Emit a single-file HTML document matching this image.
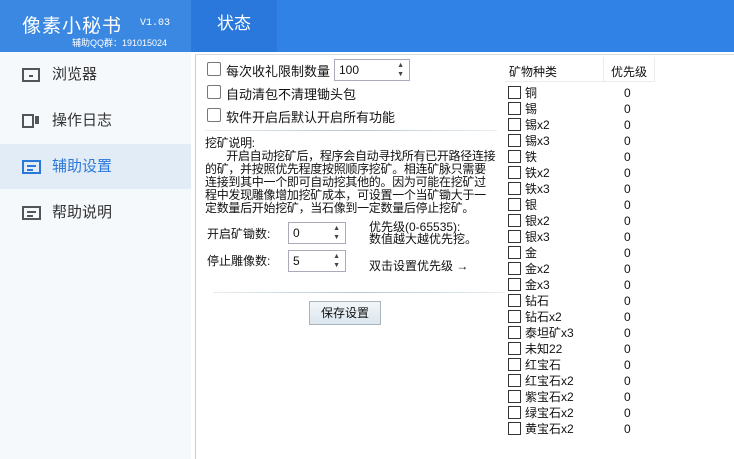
<!DOCTYPE html>
<html><head><meta charset="utf-8"><style>
*{margin:0;padding:0;box-sizing:border-box}
body{width:734px;height:459px;overflow:hidden;background:#fff;font-family:"Liberation Sans","Noto Sans CJK SC",sans-serif;font-size:12px;color:#111;position:relative}
.abs{position:absolute}
.hdr{left:0;top:0;width:734px;height:52px;background:#3082e6}
.logo{left:0;top:0;width:191px;height:52px;background:#3a88e2}
.tab{left:191px;top:0;width:86px;height:52px;background:#2a78dc;color:#fff;font-size:17px;text-align:center;line-height:48px}
.side{left:0;top:52px;width:191px;height:407px;background:#f5f9fc}
.item{position:absolute;left:0;width:191px;height:45px;font-size:15px;color:#333;line-height:45px;padding-left:52px}
.item.sel{background:#e2ecf6;color:#2b78d8}
.ico{position:absolute;left:22px;top:16px;width:19px;height:14px;border:2px solid #555}
.ico i{position:absolute;left:3px;right:3px;height:2px;background:#555}
.sel .ico{border-color:#2b78d8}.sel .ico i{background:#2b78d8}
.panel{left:195px;top:54px;width:539px;height:405px;border-left:1px solid #c8ccd0;border-top:1px solid #d8dce0}
.cb{position:absolute;width:14px;height:14px;border:1px solid #777;background:#fff;border-radius:2px}
.t{position:absolute;white-space:nowrap}
.spin{position:absolute;height:22px;border:1px solid #aab;background:#fff;padding-left:4px;line-height:20px}
.spin:after{content:"▲\A▼";white-space:pre;position:absolute;right:5px;top:1px;font-size:7px;line-height:9px;color:#444}
.hr{position:absolute;height:1px;background:linear-gradient(90deg,#e8eef2,#b8c6cf,#e8eef2)}
.m{position:absolute;left:508px;width:120px;height:16px;line-height:16px}
.m .b{position:absolute;left:0;top:1px;width:13px;height:13px;border:1px solid #333}
.m .n{position:absolute;left:17px;top:0;font-size:12px;line-height:16px}
.m .v{position:absolute;left:116px;top:0;line-height:16px}
</style></head><body>
<div class="abs hdr"></div>
<div class="abs logo"></div>
<div class="abs t" style="left:22px;top:11px;color:#fff;font-size:19px;letter-spacing:1px">像素小秘书</div>
<div class="abs t" style="left:140px;top:18px;color:#fff;font-size:10px;font-family:'Liberation Mono',monospace">V1.03</div>
<div class="abs t" style="left:72px;top:36px;color:#fff;font-size:9px">辅助QQ群：191015024</div>
<div class="abs tab">状态</div>
<div class="abs side">
<div class="item" style="top:0"><span class="ico" style="width:18px"><i style="top:5px;left:5px;right:5px"></i></span>浏览器</div>
<div class="item" style="top:46px"><span class="ico" style="width:12px"></span><span class="abs" style="left:35px;top:18px;width:4px;height:8px;background:#555"></span>操作日志</div>
<div class="item sel" style="top:92px"><span class="ico"><i style="top:3px"></i><i style="top:7px;right:6px"></i></span>辅助设置</div>
<div class="item" style="top:138px"><span class="ico"><i style="top:3px"></i><i style="top:7px;right:6px"></i></span>帮助说明</div>
</div>
<div class="abs panel"></div>
<div class="cb" style="left:207px;top:62px"></div><div class="t" style="left:226px;top:61px;font-size:13px">每次收礼限制数量</div>
<div class="spin" style="left:334px;top:59px;width:76px">100</div>
<div class="cb" style="left:207px;top:85px"></div><div class="t" style="left:226px;top:84px;font-size:13px">自动清包不清理锄头包</div>
<div class="cb" style="left:207px;top:108px"></div><div class="t" style="left:226px;top:107px;font-size:13px">软件开启后默认开启所有功能</div>
<div class="hr" style="left:205px;top:130px;width:292px"></div>
<div class="t" style="left:205px;top:137px;line-height:13px;font-size:12px;white-space:normal;width:292px;letter-spacing:-0.3px">挖矿说明:<br>&nbsp;&nbsp;&nbsp;&nbsp;&nbsp;&nbsp;&nbsp;开启自动挖矿后，程序会自动寻找所有已开路径连接的矿，并按照优先程度按照顺序挖矿。相连矿脉只需要连接到其中一个即可自动挖其他的。因为可能在挖矿过程中发现雕像增加挖矿成本，可设置一个当矿锄大于一定数量后开始挖矿，当石像到一定数量后停止挖矿。</div>
<div class="t" style="left:207px;top:225px;font-size:12px">开启矿锄数:</div>
<div class="spin" style="left:288px;top:222px;width:58px">0</div>
<div class="t" style="left:207px;top:252px;font-size:12px">停止雕像数:</div>
<div class="spin" style="left:288px;top:250px;width:58px">5</div>
<div class="t" style="left:369px;top:221px;line-height:12px">优先级(0-65535):<br>数值越大越优先挖。</div>
<div class="t" style="left:369px;top:257px">双击设置优先级 →</div>
<div class="hr" style="left:213px;top:292px;width:292px"></div>
<div class="abs" style="left:309px;top:301px;width:72px;height:24px;border:1px solid #aab4bc;background:linear-gradient(#f2f6f9,#dbe6ee);text-align:center;line-height:22px;font-size:12px">保存设置</div>
<div class="abs" style="left:505px;top:57px;width:150px;height:25px;border-bottom:1px solid #e8ecef"></div>
<div class="abs" style="left:603px;top:57px;width:1px;height:25px;background:#e8ecef"></div>
<div class="abs" style="left:654px;top:57px;width:1px;height:25px;background:#e8ecef"></div>
<div class="t" style="left:509px;top:63px">矿物种类</div>
<div class="t" style="left:611px;top:63px">优先级</div>
<div class="m" style="top:85px"><span class="b"></span><span class="n">铜</span><span class="v">0</span></div>
<div class="m" style="top:101px"><span class="b"></span><span class="n">锡</span><span class="v">0</span></div>
<div class="m" style="top:117px"><span class="b"></span><span class="n">锡x2</span><span class="v">0</span></div>
<div class="m" style="top:133px"><span class="b"></span><span class="n">锡x3</span><span class="v">0</span></div>
<div class="m" style="top:149px"><span class="b"></span><span class="n">铁</span><span class="v">0</span></div>
<div class="m" style="top:165px"><span class="b"></span><span class="n">铁x2</span><span class="v">0</span></div>
<div class="m" style="top:181px"><span class="b"></span><span class="n">铁x3</span><span class="v">0</span></div>
<div class="m" style="top:197px"><span class="b"></span><span class="n">银</span><span class="v">0</span></div>
<div class="m" style="top:213px"><span class="b"></span><span class="n">银x2</span><span class="v">0</span></div>
<div class="m" style="top:229px"><span class="b"></span><span class="n">银x3</span><span class="v">0</span></div>
<div class="m" style="top:245px"><span class="b"></span><span class="n">金</span><span class="v">0</span></div>
<div class="m" style="top:261px"><span class="b"></span><span class="n">金x2</span><span class="v">0</span></div>
<div class="m" style="top:277px"><span class="b"></span><span class="n">金x3</span><span class="v">0</span></div>
<div class="m" style="top:293px"><span class="b"></span><span class="n">钻石</span><span class="v">0</span></div>
<div class="m" style="top:309px"><span class="b"></span><span class="n">钻石x2</span><span class="v">0</span></div>
<div class="m" style="top:325px"><span class="b"></span><span class="n">泰坦矿x3</span><span class="v">0</span></div>
<div class="m" style="top:341px"><span class="b"></span><span class="n">未知22</span><span class="v">0</span></div>
<div class="m" style="top:357px"><span class="b"></span><span class="n">红宝石</span><span class="v">0</span></div>
<div class="m" style="top:373px"><span class="b"></span><span class="n">红宝石x2</span><span class="v">0</span></div>
<div class="m" style="top:389px"><span class="b"></span><span class="n">紫宝石x2</span><span class="v">0</span></div>
<div class="m" style="top:405px"><span class="b"></span><span class="n">绿宝石x2</span><span class="v">0</span></div>
<div class="m" style="top:421px"><span class="b"></span><span class="n">黄宝石x2</span><span class="v">0</span></div>
</body></html>
